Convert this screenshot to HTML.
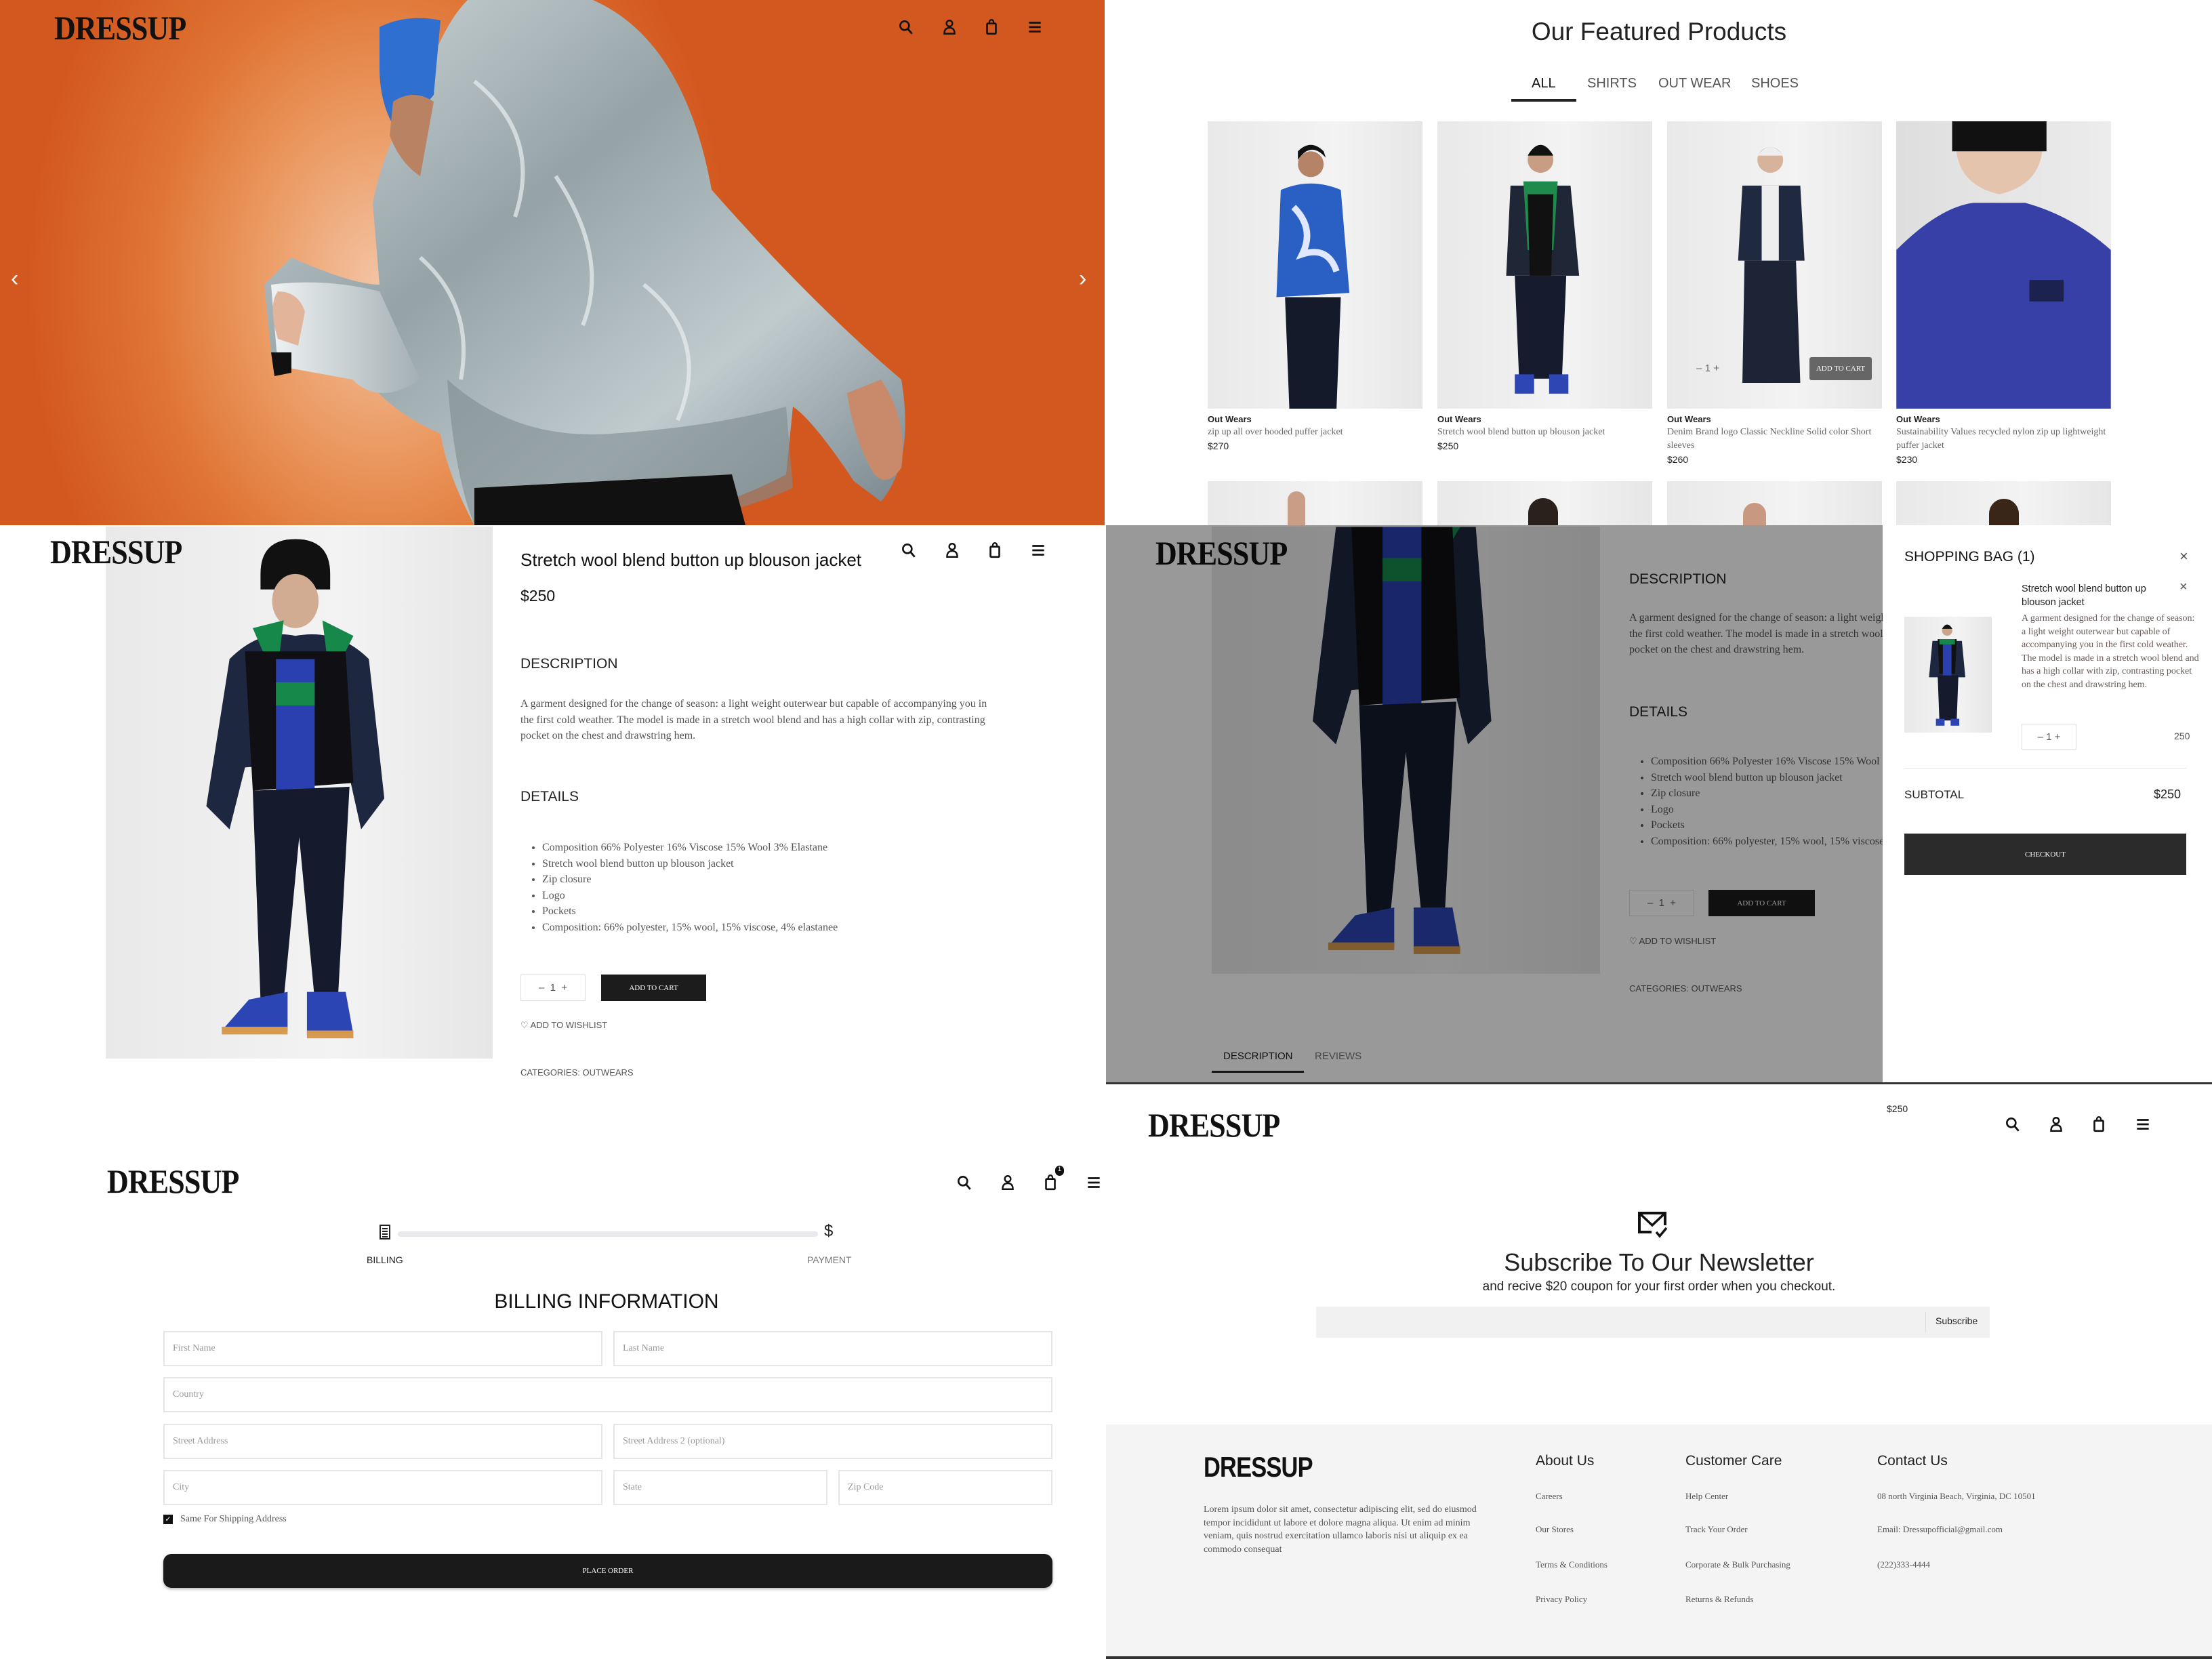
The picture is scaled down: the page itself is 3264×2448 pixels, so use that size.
<!DOCTYPE html>
<html><head><meta charset="utf-8">
<style>
*{margin:0;padding:0;box-sizing:border-box}
body{width:3264px;height:2448px;position:relative;overflow:hidden;background:#fff;font-family:"Liberation Serif",serif;color:#222}
.a{position:absolute}
.sans{font-family:"Liberation Sans",sans-serif}
.logo{position:absolute;font-family:"Liberation Serif",serif;font-size:50px;letter-spacing:-1px;color:#111;transform:scaleX(.88);transform-origin:left top;line-height:1;font-weight:bold}
.ic{position:absolute;width:26px;height:26px}
.img{background:linear-gradient(90deg,#e9e9e9,#f3f3f3 60%,#e6e6e6);overflow:hidden}
.cat{font-family:"Liberation Sans",sans-serif;font-weight:bold;font-size:13px;color:#222}
.nm{font-size:14px;color:#666;line-height:20px}
.pr{font-family:"Liberation Sans",sans-serif;font-size:14px;color:#222}
.h{font-family:"Liberation Sans",sans-serif;font-size:21px;color:#222}
.p{font-size:16px;color:#555;line-height:23.5px}
ul.l{list-style:disc;font-size:16px;color:#555;line-height:23.5px;padding-left:32px}
.qty{border:1px solid #ddd;font-family:"Liberation Sans",sans-serif;font-size:15px;color:#555;display:flex;align-items:center;justify-content:space-around}
.btn{background:#1c1c1c;color:#fff;font-size:11px;display:flex;align-items:center;justify-content:center}
.in{position:absolute;border:2px solid #e6e6e6;height:52px;font-size:14px;color:#999;padding:16px 12px}
.fl{font-size:13px;color:#555}
.fh{font-family:"Liberation Sans",sans-serif;font-size:21px;color:#222}
</style></head><body>

<!-- HERO -->
<div class="a" style="left:0;top:0;width:1630px;height:775px;overflow:hidden;background:radial-gradient(ellipse 520px 700px at 560px 420px,#f3c4a4 0%,#eb9a62 35%,#df7434 65%,#d3581f 100%)">
<svg class="a" style="left:0;top:0" width="1630" height="775" viewBox="0 0 1630 775">
<defs><linearGradient id="sv" x1="0" y1="0" x2="1" y2="1"><stop offset="0" stop-color="#d2dadc"/><stop offset=".4" stop-color="#95a3a7"/><stop offset=".7" stop-color="#c0cbce"/><stop offset="1" stop-color="#75838a"/></linearGradient>
<linearGradient id="sv2" x1="0" y1="0" x2="1" y2="0"><stop offset="0" stop-color="#eef2f3"/><stop offset="1" stop-color="#a3afb3"/></linearGradient></defs>
<path d="M690 0 L875 0 Q1010 60 1050 280 Q1200 450 1330 560 Q1350 680 1300 740 L1260 710 Q1200 620 1170 600 L1160 700 Q1050 760 900 775 L700 775 Q660 700 650 640 Q560 600 530 540 L400 520 L390 420 L430 380 Q520 420 560 420 L550 300 Q570 200 620 140 Q650 40 690 0Z" fill="url(#sv)"/>
<path d="M700 120 Q800 200 760 320 M820 260 Q900 380 860 480 M620 380 Q700 450 680 560 M950 420 Q1050 500 1000 620" stroke="#e8eef0" stroke-width="6" fill="none" opacity=".7"/>
<path d="M400 420 Q480 410 560 430 L620 560 Q560 600 520 560 L410 540Z" fill="url(#sv2)"/>
<path d="M660 560 Q760 650 900 640 Q1050 630 1160 600 L1170 720 Q1050 775 900 775 L700 775 Q670 700 660 560Z" fill="#7f8c90" opacity=".6"/>
<path d="M560 40 Q600 20 650 30 L640 140 L590 200 Q560 160 560 100Z" fill="#2f6fd0"/>
<path d="M580 150 Q610 130 640 150 L620 260 Q590 240 575 200Z" fill="#b98263"/>
<path d="M400 520 L405 555 L430 550 L430 520Z" fill="#111"/>
<path d="M1250 580 L1300 560 Q1340 620 1330 690 Q1310 720 1290 700 Q1260 650 1250 580Z" fill="#c98a6b"/>
<path d="M410 500 Q395 450 410 430 Q440 430 450 460 L440 510Z" fill="#e2b49a"/>
<path d="M700 720 L1080 700 L1100 775 L700 775Z" fill="#111"/>
</svg>
<div class="logo" style="left:80px;top:16px">DRESSUP</div>
<div class="a sans" style="left:16px;top:392px;font-size:34px;color:#fff">‹</div>
<div class="a sans" style="left:1592px;top:392px;font-size:34px;color:#fff">›</div>
</div>

<!-- FEATURED -->
<div class="a sans" style="left:1632px;top:26px;width:1632px;text-align:center;font-size:37px;color:#222">Our Featured Products</div>
<div class="a sans" style="left:2260px;top:112px;font-size:20px;color:#111">ALL</div>
<div class="a sans" style="left:2342px;top:112px;font-size:20px;color:#555">SHIRTS</div>
<div class="a sans" style="left:2447px;top:112px;font-size:20px;color:#555">OUT WEAR</div>
<div class="a sans" style="left:2584px;top:112px;font-size:20px;color:#555">SHOES</div>
<div class="a" style="left:2230px;top:146px;width:96px;height:4px;background:#222"></div>

<!-- product cards -->
<div class="a img" style="left:1782px;top:179px;width:317px;height:424px">
<svg width="317" height="424" viewBox="0 0 100 134"><circle cx="48" cy="20" r="6" fill="#b58466"/><path d="M42 18 Q48 9 55 17 L54 14 Q48 8 42 14Z" fill="#111"/><path d="M34 32 Q48 26 62 32 L66 80 L32 82Z" fill="#2a5fc4"/><path d="M40 40 Q50 50 44 62 Q56 58 60 70" stroke="#dfe8ff" stroke-width="3" fill="none"/><path d="M36 82 L62 82 L60 134 L38 134Z" fill="#151a2a"/></svg></div>
<div class="a img" style="left:2121px;top:179px;width:317px;height:424px">
<svg width="317" height="424" viewBox="0 0 100 134"><circle cx="48" cy="18" r="6" fill="#c79d84"/><path d="M42 16 Q48 6 54 16Z" fill="#111"/><path d="M34 30 L62 30 L66 72 L32 72Z" fill="#1f2636"/><path d="M40 28 L56 28 L54 60 L42 60Z" fill="#1e8a4c"/><path d="M42 34 L54 34 L53 72 L43 72Z" fill="#111"/><path d="M36 72 L60 72 L58 120 L38 120Z" fill="#161c2d"/><rect x="36" y="118" width="9" height="9" fill="#2d46b3"/><rect x="52" y="118" width="9" height="9" fill="#2d46b3"/></svg></div>
<div class="a img" style="left:2460px;top:179px;width:317px;height:424px">
<svg width="317" height="424" viewBox="0 0 100 134"><circle cx="48" cy="18" r="6" fill="#d8b39c"/><path d="M42 16 Q48 8 54 16Z" fill="#eee"/><path d="M35 30 L62 30 L64 65 L33 65Z" fill="#1f2a40"/><rect x="44" y="30" width="8" height="35" fill="#eee"/><path d="M36 65 L60 65 L62 122 L35 122Z" fill="#1c2436"/></svg>
<div class="a qty" style="left:25px;top:347px;width:70px;height:34px;border:none;color:#666">– 1 +</div>
<div class="a" style="left:210px;top:348px;width:92px;height:34px;background:#666;color:#fff;font-size:11px;display:flex;align-items:center;justify-content:center;border-radius:3px">ADD TO CART</div></div>
<div class="a img" style="left:2798px;top:179px;width:317px;height:424px;background:linear-gradient(90deg,#dedede,#ececec)">
<svg width="317" height="424" viewBox="0 0 100 134"><path d="M28 0 L66 0 L68 14 Q66 30 48 34 Q30 30 28 14Z" fill="#e5c4ae"/><path d="M26 0 L70 0 L70 14 L26 14Z" fill="#111"/><path d="M0 60 Q20 40 36 38 L60 38 Q82 44 100 60 L100 134 L0 134Z" fill="#3640a6"/><rect x="62" y="74" width="16" height="10" fill="#1b2250"/></svg></div>

<div class="a cat" style="left:1782px;top:611px">Out Wears</div><div class="a nm" style="left:1782px;top:628px">zip up all over hooded puffer jacket</div><div class="a pr" style="left:1782px;top:650px">$270</div>
<div class="a cat" style="left:2121px;top:611px">Out Wears</div><div class="a nm" style="left:2121px;top:628px">Stretch wool blend button up blouson jacket</div><div class="a pr" style="left:2121px;top:650px">$250</div>
<div class="a cat" style="left:2460px;top:611px">Out Wears</div><div class="a nm" style="left:2460px;top:628px;width:320px">Denim Brand logo Classic Neckline Solid color Short sleeves</div><div class="a pr" style="left:2460px;top:670px">$260</div>
<div class="a cat" style="left:2798px;top:611px">Out Wears</div><div class="a nm" style="left:2798px;top:628px;width:320px">Sustainability Values recycled nylon zip up lightweight puffer jacket</div><div class="a pr" style="left:2798px;top:670px">$230</div>

<div class="a img" style="left:1782px;top:710px;width:317px;height:65px"></div>
<div class="a img" style="left:2121px;top:710px;width:317px;height:65px"></div>
<div class="a img" style="left:2460px;top:710px;width:317px;height:65px"></div>
<div class="a img" style="left:2798px;top:710px;width:317px;height:65px"></div>
<div class="a" style="left:1900px;top:725px;width:26px;height:50px;border-radius:13px 13px 0 0;background:#c89e86"></div>
<div class="a" style="left:2255px;top:735px;width:44px;height:40px;border-radius:22px 22px 0 0;background:#2a201c"></div>
<div class="a" style="left:2572px;top:742px;width:34px;height:33px;border-radius:17px 17px 0 0;background:#c99880"></div>
<div class="a" style="left:2935px;top:736px;width:44px;height:39px;border-radius:22px 22px 0 0;background:#3a2618"></div>

<svg class="ic" style="left:1324px;top:27px" viewBox="0 0 24 24"><circle cx="10" cy="10" r="6" stroke="#111" stroke-width="2.4" fill="none"/><path d="M14 14 L20 21" stroke="#111" stroke-width="2.6"/></svg>
<svg class="ic" style="left:1388px;top:27px" viewBox="0 0 24 24"><circle cx="12" cy="7" r="4" stroke="#111" stroke-width="2.2" fill="none"/><path d="M5 21 Q5 13 12 13 Q19 13 19 21Z" stroke="#111" stroke-width="2.2" fill="none"/></svg>
<svg class="ic" style="left:1450px;top:26px" viewBox="0 0 24 24"><rect x="6" y="8" width="12" height="14" rx="1" stroke="#111" stroke-width="2.4" fill="none"/><path d="M9 8 Q9 3 12 3 Q15 3 15 8" stroke="#111" stroke-width="2" fill="none"/></svg>
<svg class="ic" style="left:1514px;top:27px" viewBox="0 0 24 24"><path d="M4 6H20M4 12H20M4 18H20" stroke="#111" stroke-width="2.6"/></svg>

<!-- PRODUCT DETAIL -->
<div class="a" style="left:0;top:775px;width:1632px;height:825px;background:#fff;overflow:hidden">
<div class="a img" style="left:156px;top:2px;width:571px;height:785px">
<svg width="571" height="785" viewBox="0 0 100 137"><path d="M49 3 Q58 3 58 12 L58 16 L40 16 L40 12 Q40 3 49 3Z" fill="#111"/><ellipse cx="49" cy="19" rx="6" ry="7" fill="#d2ab93"/><path d="M32 34 Q40 26 49 28 Q60 26 68 34 L72 70 L66 78 L62 60 L36 62 L32 78 L26 72Z" fill="#1e2740"/><path d="M38 26 L46 24 L44 40 Z M56 24 L64 28 L58 40Z" fill="#16894a"/><path d="M36 32 L62 32 L64 66 L38 68Z" fill="#0f0f14"/><rect x="44" y="34" width="10" height="36" fill="#2a40b0"/><rect x="44" y="40" width="10" height="6" fill="#16894a"/><path d="M38 68 L63 67 L60 122 L54 122 L50 80 L46 122 L40 122Z" fill="#151b2c"/><path d="M37 122 L47 120 L47 130 L30 130Z" fill="#2c45b5"/><path d="M52 120 L62 120 L64 131 L52 131Z" fill="#2c45b5"/><path d="M30 129 L47 129 L47 131 L30 131Z M52 130 L64 130 L64 132 L52 132Z" fill="#d59a4e"/></svg></div>
<div class="logo" style="left:74px;top:14px">DRESSUP</div>
<div class="a sans" style="left:768px;top:36px;font-size:26px;color:#111">Stretch wool blend button up blouson jacket</div>
<div class="a sans" style="left:768px;top:91px;font-size:23px;color:#111">$250</div>
<div class="a h" style="left:768px;top:193px">DESCRIPTION</div>
<div class="a p" style="left:768px;top:252px;width:700px">A garment designed for the change of season: a light weight outerwear but capable of accompanying you in the first cold weather. The model is made in a stretch wool blend and has a high collar with zip, contrasting pocket on the chest and drawstring hem.</div>
<div class="a h" style="left:768px;top:389px">DETAILS</div>
<ul class="a l" style="left:768px;top:464px"><li>Composition 66% Polyester 16% Viscose 15% Wool 3% Elastane</li><li>Stretch wool blend button up blouson jacket</li><li>Zip closure</li><li>Logo</li><li>Pockets</li><li>Composition: 66% polyester, 15% wool, 15% viscose, 4% elastanee</li></ul>
<div class="a qty" style="left:768px;top:663px;width:96px;height:39px">– &nbsp;1&nbsp; +</div>
<div class="a btn" style="left:887px;top:663px;width:155px;height:39px">ADD TO CART</div>
<div class="a sans" style="left:768px;top:730px;font-size:13px;color:#555">♡ ADD TO WISHLIST</div>
<div class="a sans" style="left:768px;top:800px;font-size:13px;color:#555">CATEGORIES: OUTWEARS</div>
<svg class="ic" style="left:1328px;top:24px" viewBox="0 0 24 24"><circle cx="10" cy="10" r="6" stroke="#111" stroke-width="2.4" fill="none"/><path d="M14 14 L20 21" stroke="#111" stroke-width="2.6"/></svg>
<svg class="ic" style="left:1392px;top:24px" viewBox="0 0 24 24"><circle cx="12" cy="7" r="4" stroke="#111" stroke-width="2.2" fill="none"/><path d="M5 21 Q5 13 12 13 Q19 13 19 21Z" stroke="#111" stroke-width="2.2" fill="none"/></svg>
<svg class="ic" style="left:1455px;top:23px" viewBox="0 0 24 24"><rect x="6" y="8" width="12" height="14" rx="1" stroke="#111" stroke-width="2.4" fill="none"/><path d="M9 8 Q9 3 12 3 Q15 3 15 8" stroke="#111" stroke-width="2" fill="none"/></svg>
<svg class="ic" style="left:1519px;top:24px" viewBox="0 0 24 24"><path d="M4 6H20M4 12H20M4 18H20" stroke="#111" stroke-width="2.6"/></svg>
</div>

<!-- SHOPPING BAG QUADRANT -->
<div class="a" style="left:1632px;top:775px;width:1632px;height:825px;background:#fff;overflow:hidden;border-bottom:3px solid #333">
<div class="a img" style="left:156px;top:2px;width:573px;height:660px">
<svg width="573" height="660" viewBox="0 0 100 115"><path d="M32 0 L68 0 L72 50 L66 56 L62 40 L36 42 L32 56 L26 50Z" fill="#1e2740"/><path d="M38 0 L46 0 L44 10 Z M56 0 L64 0 L58 10Z" fill="#16894a"/><path d="M36 0 L62 0 L64 44 L38 46Z" fill="#0f0f14"/><rect x="44" y="0" width="10" height="48" fill="#2a40b0"/><rect x="44" y="8" width="10" height="6" fill="#16894a"/><path d="M38 46 L63 45 L60 100 L54 100 L50 58 L46 100 L40 100Z" fill="#151b2c"/><path d="M37 100 L47 98 L47 108 L30 108Z" fill="#2c45b5"/><path d="M52 98 L62 98 L64 109 L52 109Z" fill="#2c45b5"/><path d="M30 107 L47 107 L47 109 L30 109Z M52 108 L64 108 L64 110 L52 110Z" fill="#d59a4e"/></svg></div>
<div class="logo" style="left:73px;top:16px">DRESSUP</div>
<div class="a h" style="left:772px;top:68px">DESCRIPTION</div>
<div class="a p" style="left:772px;top:125px;width:700px">A garment designed for the change of season: a light weight outerwear but capable of accompanying you in the first cold weather. The model is made in a stretch wool blend and has a high collar with zip, contrasting pocket on the chest and drawstring hem.</div>
<div class="a h" style="left:772px;top:264px">DETAILS</div>
<ul class="a l" style="left:772px;top:337px"><li>Composition 66% Polyester 16% Viscose 15% Wool 3% Elastane</li><li>Stretch wool blend button up blouson jacket</li><li>Zip closure</li><li>Logo</li><li>Pockets</li><li>Composition: 66% polyester, 15% wool, 15% viscose, 4% elastanee</li></ul>
<div class="a qty" style="left:772px;top:538px;width:96px;height:39px">– &nbsp;1&nbsp; +</div>
<div class="a btn" style="left:889px;top:538px;width:157px;height:39px">ADD TO CART</div>
<div class="a sans" style="left:772px;top:606px;font-size:13px;color:#555">♡ ADD TO WISHLIST</div>
<div class="a sans" style="left:772px;top:676px;font-size:13px;color:#555">CATEGORIES: OUTWEARS</div>
<div class="a sans" style="left:173px;top:775px;font-size:15px;color:#222">DESCRIPTION</div>
<div class="a sans" style="left:308px;top:775px;font-size:15px;color:#777">REVIEWS</div>
<div class="a" style="left:156px;top:805px;width:136px;height:3px;background:#222"></div>
<div class="a" style="left:0;top:0;width:1146px;height:825px;background:rgba(0,0,0,.4)"></div>
<div class="a" style="left:1146px;top:0;width:486px;height:825px;background:#fff">
<div class="a sans" style="left:32px;top:35px;font-size:21px;color:#111">SHOPPING BAG (1)</div>
<div class="a sans" style="left:438px;top:33px;font-size:22px;color:#555">×</div>
<div class="a img" style="left:32px;top:135px;width:129px;height:171px">
<svg width="129" height="171" viewBox="0 0 100 134"><circle cx="49" cy="16" r="6" fill="#c9a58c"/><path d="M43 14 Q49 4 55 14Z" fill="#111"/><path d="M32 28 L66 28 L70 70 L28 70Z" fill="#1e2740"/><path d="M38 26 L60 26 L58 66 L40 66Z" fill="#111"/><rect x="44" y="28" width="10" height="40" fill="#2a40b0"/><rect x="40" y="26" width="18" height="6" fill="#16894a"/><path d="M38 68 L62 68 L60 120 L40 120Z" fill="#151b2c"/><rect x="36" y="118" width="10" height="8" fill="#2c45b5"/><rect x="53" y="118" width="10" height="8" fill="#2c45b5"/></svg></div>
<div class="a sans" style="left:205px;top:84px;width:210px;font-size:14.5px;line-height:20px;color:#222">Stretch wool blend button up blouson jacket</div>
<div class="a sans" style="left:438px;top:80px;font-size:20px;color:#555">×</div>
<div class="a" style="left:205px;top:128px;width:262px;font-size:14px;line-height:19.6px;color:#6a5a55">A garment designed for the change of season: a light weight outerwear but capable of accompanying you in the first cold weather. The model is made in a stretch wool blend and has a high collar with zip, contrasting pocket on the chest and drawstring hem.</div>
<div class="a qty" style="left:205px;top:293px;width:81px;height:38px">– 1 +</div>
<div class="a sans" style="left:430px;top:303px;font-size:14px;color:#555">250</div>
<div class="a" style="left:32px;top:358px;width:416px;height:1px;background:#e5e5e5"></div>
<div class="a sans" style="left:32px;top:388px;font-size:17px;color:#222">SUBTOTAL</div>
<div class="a sans" style="left:400px;top:387px;font-size:18px;color:#222">$250</div>
<div class="a" style="left:32px;top:455px;width:416px;height:61px;background:#2b2b2b;color:#fff;font-size:11px;display:flex;align-items:center;justify-content:center">CHECKOUT</div>
</div>
</div>

<!-- CHECKOUT -->
<div class="logo" style="left:158px;top:1718px">DRESSUP</div>
<svg class="ic" style="left:1410px;top:1732px" viewBox="0 0 24 24"><circle cx="10" cy="10" r="6" stroke="#111" stroke-width="2.4" fill="none"/><path d="M14 14 L20 21" stroke="#111" stroke-width="2.6"/></svg>
<svg class="ic" style="left:1474px;top:1732px" viewBox="0 0 24 24"><circle cx="12" cy="7" r="4" stroke="#111" stroke-width="2.2" fill="none"/><path d="M5 21 Q5 13 12 13 Q19 13 19 21Z" stroke="#111" stroke-width="2.2" fill="none"/></svg>
<svg class="ic" style="left:1537px;top:1731px" viewBox="0 0 24 24"><rect x="6" y="8" width="12" height="14" rx="1" stroke="#111" stroke-width="2.4" fill="none"/><path d="M9 8 Q9 3 12 3 Q15 3 15 8" stroke="#111" stroke-width="2" fill="none"/></svg>
<div class="a" style="left:1557px;top:1720px;width:13px;height:15px;border-radius:7px;background:#111;color:#fff;font-size:9px;text-align:center;font-family:'Liberation Sans'">1</div>
<svg class="ic" style="left:1601px;top:1732px" viewBox="0 0 24 24"><path d="M4 6H20M4 12H20M4 18H20" stroke="#111" stroke-width="2.6"/></svg>
<svg class="a" style="left:558px;top:1806px" width="20" height="24" viewBox="0 0 20 24"><rect x="3" y="2" width="14" height="20" fill="none" stroke="#222" stroke-width="2"/><path d="M6 7H14M6 11H14M6 15H14M6 19H14" stroke="#222" stroke-width="2"/></svg>
<div class="a" style="left:587px;top:1817px;width:620px;height:8px;background:#e8e8ef;border-radius:4px"></div>
<div class="a sans" style="left:1216px;top:1803px;font-size:24px;color:#222">$</div>
<div class="a sans" style="left:541px;top:1851px;font-size:14px;color:#222">BILLING</div>
<div class="a sans" style="left:1191px;top:1851px;font-size:14px;color:#777">PAYMENT</div>
<div class="a sans" style="left:0;top:1904px;width:1790px;text-align:center;font-size:30px;color:#111">BILLING INFORMATION</div>
<div class="in" style="left:241px;top:1964px;width:648px">First Name</div>
<div class="in" style="left:905px;top:1964px;width:648px">Last Name</div>
<div class="in" style="left:241px;top:2032px;width:1312px">Country</div>
<div class="in" style="left:241px;top:2101px;width:648px">Street Address</div>
<div class="in" style="left:905px;top:2101px;width:648px">Street Address 2 (optional)</div>
<div class="in" style="left:241px;top:2169px;width:648px">City</div>
<div class="in" style="left:905px;top:2169px;width:316px">State</div>
<div class="in" style="left:1237px;top:2169px;width:316px">Zip Code</div>
<div class="a" style="left:241px;top:2235px;width:14px;height:14px;background:#111;color:#fff;font-size:11px;line-height:14px;text-align:center">✓</div>
<div class="a" style="left:266px;top:2234px;font-size:14px;color:#555">Same For Shipping Address</div>
<div class="a" style="left:241px;top:2293px;width:1312px;height:50px;background:#1a1a1a;border-radius:12px;color:#fff;font-size:11px;display:flex;align-items:center;justify-content:center;box-shadow:0 2px 4px rgba(0,0,0,.3)">PLACE ORDER</div>

<!-- NEWSLETTER -->
<div class="a sans" style="left:2784px;top:1628px;font-size:14px;color:#222">$250</div>
<div class="logo" style="left:1694px;top:1635px">DRESSUP</div>
<svg class="ic" style="left:2957px;top:1646px" viewBox="0 0 24 24"><circle cx="10" cy="10" r="6" stroke="#111" stroke-width="2.4" fill="none"/><path d="M14 14 L20 21" stroke="#111" stroke-width="2.6"/></svg>
<svg class="ic" style="left:3021px;top:1646px" viewBox="0 0 24 24"><circle cx="12" cy="7" r="4" stroke="#111" stroke-width="2.2" fill="none"/><path d="M5 21 Q5 13 12 13 Q19 13 19 21Z" stroke="#111" stroke-width="2.2" fill="none"/></svg>
<svg class="ic" style="left:3084px;top:1645px" viewBox="0 0 24 24"><rect x="6" y="8" width="12" height="14" rx="1" stroke="#111" stroke-width="2.4" fill="none"/><path d="M9 8 Q9 3 12 3 Q15 3 15 8" stroke="#111" stroke-width="2" fill="none"/></svg>
<svg class="ic" style="left:3149px;top:1646px" viewBox="0 0 24 24"><path d="M4 6H20M4 12H20M4 18H20" stroke="#111" stroke-width="2.6"/></svg>
<svg class="a" style="left:2414px;top:1786px" width="48" height="42" viewBox="0 0 48 42"><path d="M23 32 H5 V4 H43 V22" fill="none" stroke="#111" stroke-width="4"/><path d="M5 4 L24 22 L43 4" fill="none" stroke="#111" stroke-width="3.5"/><path d="M30 32 L35 38 L45 26" fill="none" stroke="#111" stroke-width="3.5"/></svg>
<div class="a sans" style="left:1632px;top:1842px;width:1632px;text-align:center;font-size:36px;color:#222">Subscribe To Our Newsletter</div>
<div class="a sans" style="left:1632px;top:1888px;width:1632px;text-align:center;font-size:19px;color:#222">and recive $20 coupon for your first order when you checkout.</div>
<div class="a" style="left:1942px;top:1928px;width:994px;height:46px;background:#f1f1f1"></div>
<div class="a" style="left:2841px;top:1936px;width:1px;height:30px;background:#ddd"></div>
<div class="a sans" style="left:2856px;top:1941px;font-size:14px;color:#222">Subscribe</div>

<!-- FOOTER -->
<div class="a" style="left:1632px;top:2102px;width:1632px;height:346px;background:#f4f4f4"></div>
<div class="logo" style="left:1776px;top:2144px;font-weight:bold;font-family:'Liberation Sans',sans-serif;font-size:42px;transform:scaleX(.82)">DRESSUP</div>
<div class="a fl" style="left:1776px;top:2218px;width:405px;font-size:14px;line-height:19.5px">Lorem ipsum dolor sit amet, consectetur adipiscing elit, sed do eiusmod tempor incididunt ut labore et dolore magna aliqua. Ut enim ad minim veniam, quis nostrud exercitation ullamco laboris nisi ut aliquip ex ea commodo consequat</div>
<div class="a fh" style="left:2266px;top:2144px">About Us</div>
<div class="a fh" style="left:2487px;top:2144px">Customer Care</div>
<div class="a fh" style="left:2770px;top:2144px">Contact Us</div>
<div class="a fl" style="left:2266px;top:2200px">Careers</div>
<div class="a fl" style="left:2266px;top:2249px">Our Stores</div>
<div class="a fl" style="left:2266px;top:2301px">Terms &amp; Conditions</div>
<div class="a fl" style="left:2266px;top:2352px">Privacy Policy</div>
<div class="a fl" style="left:2487px;top:2200px">Help Center</div>
<div class="a fl" style="left:2487px;top:2249px">Track Your Order</div>
<div class="a fl" style="left:2487px;top:2301px">Corporate &amp; Bulk Purchasing</div>
<div class="a fl" style="left:2487px;top:2352px">Returns &amp; Refunds</div>
<div class="a fl" style="left:2770px;top:2200px">08 north Virginia Beach, Virginia, DC 10501</div>
<div class="a fl" style="left:2770px;top:2249px">Email: Dressupofficial@gmail.com</div>
<div class="a fl" style="left:2770px;top:2301px">(222)333-4444</div>
<div class="a" style="left:1632px;top:2444px;width:1632px;height:4px;background:#333"></div>
</body></html>
